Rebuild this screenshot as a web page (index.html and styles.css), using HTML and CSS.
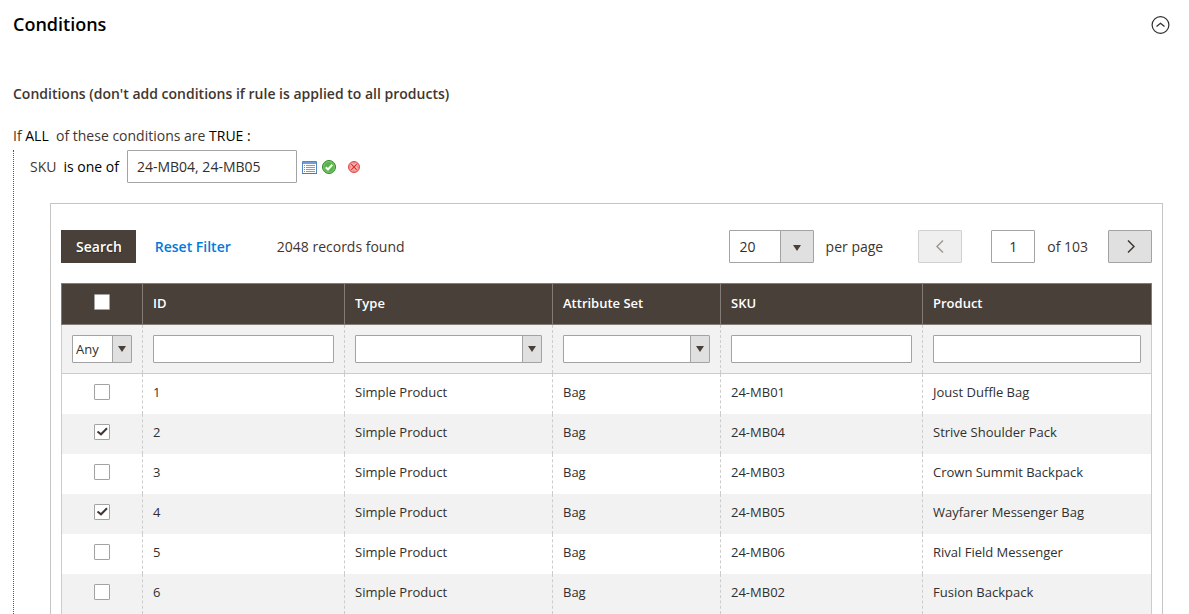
FILE: index.html
```html
<!DOCTYPE html>
<html lang="en">
<head>
<meta charset="utf-8">
<title>Conditions</title>
<link rel="stylesheet" href="styles.css">
</head>
<body>
<main class="section">
  <header class="section-head">
    <h1 class="section-title">Conditions</h1>
    <button class="collapse" type="button" aria-label="Collapse section">
      <svg width="20" height="20" viewBox="0 0 20 20" fill="none" stroke="#303030"><circle cx="9.500" cy="10" r="8.400" stroke-width="1.200"/><path d="M5.500 11.500 9.500 8.300l4 3.200" stroke-width="1.300"/></svg>
    </button>
  </header>

  <h2 class="legend">Conditions (don't add conditions if rule is applied to all products)</h2>
  <p class="rule-root">If <a href="#all">ALL</a>&nbsp; of these conditions are <a href="#true">TRUE</a> <span class="dark">:</span></p>

  <div class="rule-children">
    <div class="rule">
      <label for="sku-value">SKU</label>
      <a class="operator" href="#operator">is one of</a>
      <input class="field rule-value" id="sku-value" type="text" value="24-MB04, 24-MB05">
      <button class="icon-button chooser" type="button" aria-label="Open chooser">
        <svg width="15" height="13" viewBox="0 0 15 13"><path fill="#fff" stroke="#5686c4" d="M.5.5h14v12H.5z"/><path fill="#6f9edb" d="M1 1h13v2H1z"/><path stroke="#4c79b5" d="M0 12.500h15"/><path stroke="#5999e0" d="M2 4.500h1M2 6.500h1M2 8.500h1M2 10.500h1"/><path stroke="#999" d="M4 4.500h9M4 6.500h9M4 8.500h9M4 10.500h9"/></svg>
      </button>
      <button class="icon-button apply" type="button" aria-label="Apply">
        <svg width="14" height="14" viewBox="0 0 14 14"><circle cx="7" cy="7" r="6.500" fill="#55b548" stroke="#36852f"/><circle cx="7" cy="7" r="5.400" fill="none" stroke="#86ce77" stroke-width=".8"/><path d="m3.800 7.300 2.200 2.200 4.300-4.700" fill="none" stroke="#fff" stroke-width="2.100"/></svg>
      </button>
      <button class="icon-button" type="button" aria-label="Remove">
        <svg width="12" height="12" viewBox="0 0 12 12"><circle cx="6" cy="6" r="5.500" fill="#f58f8d" stroke="#df4b4b"/><path d="m3.300 3.300 5.400 5.400m0-5.400-5.400 5.400" stroke="#fdd9d8" stroke-width="2.800"/><path d="m3.300 3.300 5.400 5.400m0-5.400-5.400 5.400" stroke="#d92f2f" stroke-width="1.300"/></svg>
      </button>
    </div>

    <section class="panel">
      <div class="toolbar">
        <button class="search" type="button">Search</button>
        <button class="reset" type="button">Reset Filter</button>
        <span class="records">2048 records found</span>
        <span class="select-box per-page"><select id="limit"><option>20</option></select></span>
        <label class="per-page-label" for="limit">per page</label>
        <button class="page-button" type="button" aria-label="Previous page" disabled>
          <svg width="10" height="14" viewBox="0 0 10 14"><path d="M8 .5 2 6.500l6 6"/></svg>
        </button>
        <input class="field page-number" id="page" type="text" value="1">
        <label class="page-total" for="page">of 103</label>
        <button class="page-button" type="button" aria-label="Next page">
          <svg width="10" height="14" viewBox="0 0 10 14"><path d="m3 .5 6 6-6 6"/></svg>
        </button>
      </div>

      <table class="grid">
        <colgroup><col class="col-check"><col class="col-id"><col class="col-type"><col class="col-set"><col class="col-sku"><col></colgroup>
        <thead>
          <tr class="titles">
            <th class="check"><input type="checkbox" aria-label="Select all"></th>
            <th>ID</th><th>Type</th><th>Attribute Set</th><th>SKU</th><th>Product</th>
          </tr>
          <tr class="filters">
            <td><span class="select-box any"><select aria-label="Selection"><option>Any</option></select></span></td>
            <td><input class="field" type="text" aria-label="ID"></td>
            <td><span class="select-box"><select aria-label="Type"><option></option></select></span></td>
            <td><span class="select-box"><select aria-label="Attribute Set"><option></option></select></span></td>
            <td><input class="field" type="text" aria-label="SKU filter"></td>
            <td><input class="field" type="text" aria-label="Product"></td>
          </tr>
        </thead>
        <tbody>
          <tr><td class="check"><input type="checkbox" aria-label="Joust Duffle Bag"></td><td>1</td><td>Simple Product</td><td>Bag</td><td>24-MB01</td><td>Joust Duffle Bag</td></tr>
          <tr><td class="check"><input type="checkbox" aria-label="Strive Shoulder Pack" checked></td><td>2</td><td>Simple Product</td><td>Bag</td><td>24-MB04</td><td>Strive Shoulder Pack</td></tr>
          <tr><td class="check"><input type="checkbox" aria-label="Crown Summit Backpack"></td><td>3</td><td>Simple Product</td><td>Bag</td><td>24-MB03</td><td>Crown Summit Backpack</td></tr>
          <tr><td class="check"><input type="checkbox" aria-label="Wayfarer Messenger Bag" checked></td><td>4</td><td>Simple Product</td><td>Bag</td><td>24-MB05</td><td>Wayfarer Messenger Bag</td></tr>
          <tr><td class="check"><input type="checkbox" aria-label="Rival Field Messenger"></td><td>5</td><td>Simple Product</td><td>Bag</td><td>24-MB06</td><td>Rival Field Messenger</td></tr>
          <tr><td class="check"><input type="checkbox" aria-label="Fusion Backpack"></td><td>6</td><td>Simple Product</td><td>Bag</td><td>24-MB02</td><td>Fusion Backpack</td></tr>
        </tbody>
      </table>
    </section>
  </div>
</main>
</body>
</html>
```

FILE: styles.css
```css
* { box-sizing: border-box; }

body {
  margin: 0;
  background: #fff;
  color: #41362f;
  font: 14px/20px "Open Sans", "Noto Sans", sans-serif;
}

a { color: #000; text-decoration: none; }

button, input, select { font: inherit; margin: 0; }

button { padding: 0; border: 0; background: none; cursor: pointer; }

svg { display: block; }

.section { padding: 12px 18px 0 13px; }

.section-head {
  display: flex;
  align-items: center;
  justify-content: space-between;
  height: 24px;
}

.section-title {
  margin: 0;
  color: #000;
  font-size: 18px;
  font-weight: 600;
}

.collapse { padding-top: 2px; }

.legend {
  margin: 48px 0 0;
  font-size: 14px;
  font-weight: 600;
}

.rule-root { margin: 22px 0 0; }

.dark { color: #000; }

.rule-children {
  margin-top: 4px;
  padding: 0 8px 0 16px;
  border-left: 1px dotted #555;
}

.rule { display: flex; align-items: center; height: 33px; }

.operator { margin-left: 7px; }

.field {
  display: block;
  width: 100%;
  height: 28px;
  padding: 0 4px;
  border: 1px solid #a3a3a3;
  border-radius: 1px;
  background: #fff;
  color: #303030;
}

.rule-value {
  width: 170px;
  height: 33px;
  margin-left: 8px;
  padding: 0 9px;
}

.chooser { margin-left: 5px; }
.icon-button { padding-top: 1px; }
.icon-button + .icon-button { margin-left: 12px; }
.icon-button + .apply { margin-left: 5px; }

.panel {
  margin: 20px 0 0 20px;
  padding: 26px 10px 0;
  border: solid #c4c4c4;
  border-width: 1px 1px 0;
}

.toolbar { display: flex; align-items: center; height: 33px; }

.search {
  height: 33px;
  padding: 0 14px 0 15px;
  background: #49403a;
  color: #fff;
  font-weight: 600;
  text-shadow: 1px 1px 0 rgba(0, 0, 0, 0.3);
}

.reset { margin-left: 19px; color: #007bdb; font-weight: 600; }

.records { margin-left: 46px; }

.select-box {
  position: relative;
  display: block;
  height: 28px;
}

.select-box select {
  display: block;
  width: 100%;
  height: 100%;
  padding: 0 20px 0 3px;
  border: 1px solid #a3a3a3;
  border-radius: 1px;
  appearance: none;
  background: linear-gradient(to left, #e0e0e0 18px, #a3a3a3 18px, #a3a3a3 19px, #fff 19px);
  color: #303030;
}

.select-box::after {
  content: "";
  position: absolute;
  top: 50%;
  right: 6px;
  margin-top: -3px;
  border: solid transparent;
  border-width: 6px 4px 0;
  border-top-color: #49403a;
  pointer-events: none;
}

.any { width: 60px; }

.per-page { width: 85px; height: 33px; margin-left: auto; }

.per-page select {
  padding: 0 36px 0 10px;
  background: linear-gradient(to left, #e0e0e0 32px, #a3a3a3 32px, #a3a3a3 33px, #fff 33px);
}

.per-page::after { right: 13px; margin-top: -2px; }

.per-page-label { margin-left: 12px; }

.page-button {
  display: grid;
  place-items: center;
  width: 44px;
  height: 33px;
  margin-left: 20px;
  border: 1px solid #a3a3a3;
  border-radius: 1px;
  background: #e0e0e0;
}

.page-button:disabled { margin-left: 35px; opacity: 0.5; }

.page-button path { fill: none; stroke: #41362f; stroke-width: 1.5; }

.page-number {
  width: 44px;
  height: 33px;
  margin-left: 29px;
  text-align: center;
}

.page-total { margin-left: 12px; }

.grid {
  width: 100%;
  margin-top: 20px;
  border-collapse: collapse;
  table-layout: fixed;
  color: #303030;
  font-size: 13px;
}

.col-check { width: 81px; }
.col-id, .col-sku { width: 202px; }
.col-type { width: 208px; }
.col-set { width: 168px; }

.grid th, .grid td {
  height: 40px;
  padding: 0 10px;
  text-align: left;
}

.grid th {
  height: 41px;
  padding-bottom: 2px;
  border: 1px solid #847b76;
  background: #49403a;
  color: #fff;
  font-weight: 600;
}

.grid td {
  border-left: 1px dashed #ccc;
  border-right: 1px dashed #ccc;
}

.grid td:first-child { border-left-style: solid; }
.grid td:last-child { border-right-style: solid; }

.grid .filters td {
  height: 49px;
  border-bottom: 1px solid #ccc;
  background: #f2f2f2;
}

.grid tbody td { padding-bottom: 3px; }

.grid tbody tr:nth-child(even) { background: #f2f2f2; }

.grid .check { padding-bottom: 4px; text-align: center; }

.check input {
  display: block;
  width: 16px;
  height: 16px;
  margin: 0 auto;
  border: 1px solid #a3a3a3;
  border-radius: 1px;
  appearance: none;
  background: #fff;
}

.check input:checked {
  background: #fff url("data:image/svg+xml,%3Csvg xmlns='http://www.w3.org/2000/svg' viewBox='0 0 14 14'%3E%3Cpath d='M2.500 6.500 6 9.300 12 3.300' fill='none' stroke='%2341362f' stroke-width='2'/%3E%3C/svg%3E") center / 14px 14px;
}
```
